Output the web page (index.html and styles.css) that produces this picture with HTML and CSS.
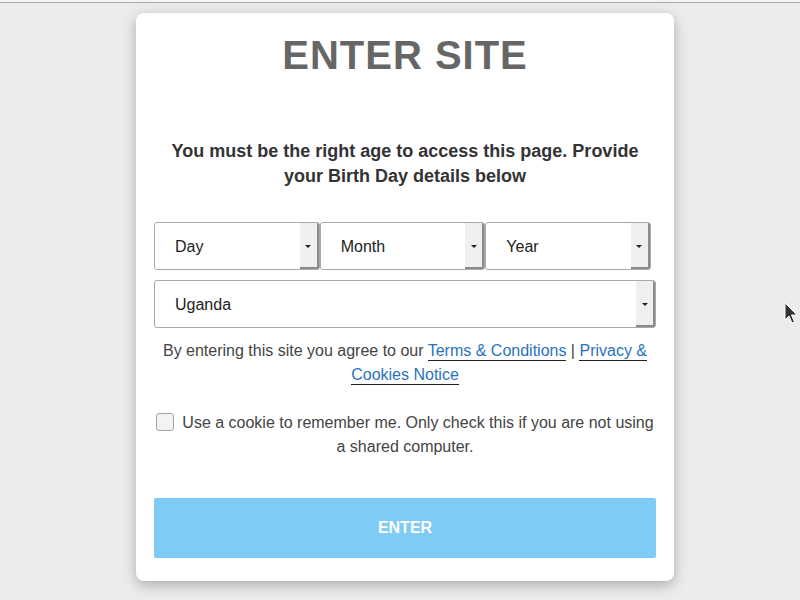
FILE: index.html
```html
<!DOCTYPE html>
<html lang="en">
<head>
<meta charset="utf-8">
<title>Enter Site</title>
<link rel="stylesheet" href="styles.css">
</head>
<body>
<div class="topline"></div>
<div class="modal">
  <h1 class="title">ENTER SITE</h1>
  <p class="lead">You must be the right age to access this page. Provide your Birth Day details below</p>
  <div class="date-row">
    <div class="select"><span class="label">Day</span><span class="arrow"></span></div>
    <div class="select"><span class="label">Month</span><span class="arrow"></span></div>
    <div class="select"><span class="label">Year</span><span class="arrow"></span></div>
  </div>
  <div class="select country"><span class="label">Uganda</span><span class="arrow"></span></div>
  <p class="terms">By entering this site you agree to our <a href="#" class="link">Terms &amp; Conditions</a> | <a href="#" class="link">Privacy &amp; Cookies Notice</a></p>
  <p class="remember"><span class="checkbox"></span>Use a cookie to remember me. Only check this if you are not using a shared computer.</p>
  <button class="enter" type="button">ENTER</button>
</div>
<svg class="cursor" width="14" height="22" viewBox="0 0 14 22"><path d="M1 1 L1 18 L5 14 L8 21 L10.5 20 L7.5 13 L13 13 Z" fill="#333" stroke="#fff" stroke-width="1"/></svg>
</body>
</html>
```
FILE: styles.css
```css
html, body {
  margin: 0;
  padding: 0;
}
body {
  background: #ececec;
  font-family: "Liberation Sans", Arial, sans-serif;
  height: 600px;
  overflow: hidden;
}
.topline {
  height: 2px;
  background: #f5f5f5;
  border-bottom: 1px solid #a8a8a8;
}
.modal {
  box-sizing: border-box;
  width: 538px;
  margin: 10px 0 0 136px;
  background: #fff;
  border-radius: 8px;
  box-shadow: 0 4px 14px rgba(0, 0, 0, 0.28);
  padding: 18px 18px 23px;
  text-align: center;
}
.title {
  margin: 0;
  font-size: 40px;
  line-height: 48px;
  font-weight: bold;
  letter-spacing: 1px;
  color: #666;
}
.lead {
  margin: 60px 0 0;
  font-size: 18px;
  line-height: 25px;
  font-weight: bold;
  color: #333;
}
.date-row {
  display: flex;
  margin-top: 33px;
}
.date-row .select {
  width: 33%;
}
.select {
  box-sizing: border-box;
  height: 48px;
  display: flex;
  align-items: stretch;
  border: 1px solid #a9a9a9;
  border-radius: 3px;
  background: #fff;
  text-align: left;
  overflow: hidden;
}
.select .label {
  flex: 1;
  display: flex;
  align-items: center;
  padding: 2px 0 0 20px;
  font-size: 16px;
  color: #222;
}
.select .arrow {
  width: 17px;
  background: #efeff1;
  border-right: 2px solid #8a8a8a;
  border-bottom: 2px solid #8a8a8a;
  display: flex;
  align-items: center;
  justify-content: center;
}
.select .arrow::after {
  content: "";
  border-left: 3px solid transparent;
  border-right: 3px solid transparent;
  border-top: 3px solid #222;
  margin-top: 2px;
}
.country {
  margin-top: 10px;
}
.terms {
  margin: 11px 0 0;
  font-size: 16px;
  line-height: 24px;
  color: #444;
}
.link {
  color: #2a72c0;
  text-decoration: none;
  border-bottom: 1px solid #222;
  padding-bottom: 1px;
}
.remember {
  margin: 24px 0 0;
  font-size: 16px;
  line-height: 24px;
  color: #444;
}
.checkbox {
  display: inline-block;
  box-sizing: border-box;
  width: 18px;
  height: 18px;
  border: 1px solid #a4a4a4;
  border-radius: 3px;
  background: #f3f3f5;
  vertical-align: -3px;
  margin-right: 8px;
}
.enter {
  display: block;
  width: 100%;
  height: 60px;
  margin-top: 39px;
  border: none;
  border-radius: 2px;
  background: #7ecbf5;
  color: #fff;
  font-family: "Liberation Sans", Arial, sans-serif;
  font-size: 16px;
  font-weight: bold;
}
.cursor {
  position: fixed;
  left: 784px;
  top: 302px;
}
```
